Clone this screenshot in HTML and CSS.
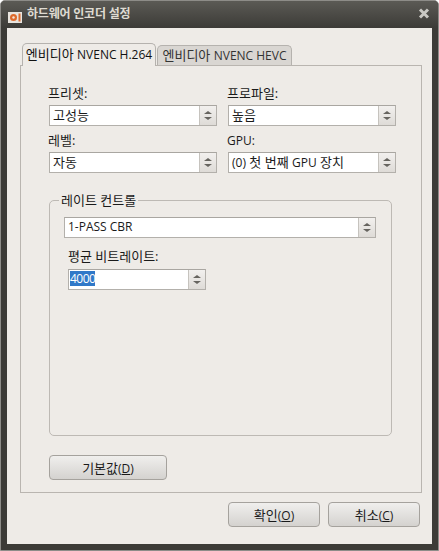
FILE: index.html
```html
<!DOCTYPE html>
<html lang="ko">
	<head>
		<meta charset="utf-8">
		<title>하드웨어 인코더 설정</title>
		<link rel="stylesheet" href="styles.css">
	</head>
	<body>
		<div class="window">
			<div class="titlebar">
				<svg class="app-icon" width="14" height="11" viewBox="0 0 14 11">
					<rect x="0" y="0" width="14" height="11" fill="#e9e5df"/>
					<circle cx="5.5" cy="5.5" r="3.5" fill="#de6a2c"/>
					<circle cx="5.5" cy="5.5" r="1.2" fill="#f6e6d8"/>
					<rect x="10.5" y="1.5" width="2" height="8" fill="#de6a2c"/>
				</svg>
				<span class="window-title">하드웨어 인코더 설정</span>
				<svg class="close-icon" width="12" height="11" viewBox="0 0 12 11">
					<path d="M2 1.5 L10 9.5 M10 1.5 L2 9.5" stroke="#c9c8c3" stroke-width="3"/>
				</svg>
			</div>

			<div class="content">
				<div class="tabs">
					<div class="tab active">엔비디아 <span class="lat">NVENC H.264</span></div>
					<div class="tab">엔비디아 <span class="lat">NVENC HEVC</span></div>
				</div>

				<div class="pane">
					<div class="form-grid">
						<div class="field">
							<label>프리셋:</label>
							<div class="combo"><span class="combo-text">고성능</span><span class="arrows"><i class="up"></i><i class="down"></i></span></div>
						</div>
						<div class="field">
							<label>프로파일:</label>
							<div class="combo"><span class="combo-text">높음</span><span class="arrows"><i class="up"></i><i class="down"></i></span></div>
						</div>
						<div class="field">
							<label>레벨:</label>
							<div class="combo"><span class="combo-text">자동</span><span class="arrows"><i class="up"></i><i class="down"></i></span></div>
						</div>
						<div class="field">
							<label class="lat">GPU:</label>
							<div class="combo"><span class="combo-text"><span class="lat">(0)</span> 첫 번째 <span class="lat">GPU</span> 장치</span><span class="arrows"><i class="up"></i><i class="down"></i></span></div>
						</div>
					</div>

					<div class="group">
						<span class="group-title">레이트 컨트롤</span>
						<div class="combo"><span class="combo-text lat">1-PASS CBR</span><span class="arrows"><i class="up"></i><i class="down"></i></span></div>
						<div class="bitrate">
							<label>평균 비트레이트:</label>
							<div class="combo spin"><span class="combo-text lat"><span class="selected">4000</span></span><span class="arrows"><i class="up"></i><i class="down"></i></span></div>
						</div>
					</div>

					<button class="btn btn-default" type="button">기본값<span class="lat">(<u>D</u>)</span></button>
				</div>

				<div class="actions">
					<button class="btn btn-action" type="button">확인<span class="lat">(<u>O</u>)</span></button>
					<button class="btn btn-action" type="button">취소<span class="lat">(<u>C</u>)</span></button>
				</div>
			</div>
		</div>
	</body>
</html>
```

FILE: styles.css
```css
html, body {
	margin: 0;
	height: 100%;
}

body {
	background: #fff;
	font-family: "Open Sans", "Noto Sans CJK KR", sans-serif;
	font-size: 13px;
	color: #1a1a1a;
}

/* latin runs sit a size below the korean text */
.lat {
	font-size: 12px;
}

.window {
	box-sizing: border-box;
	width: 439px;
	height: 551px;
	padding: 0 6px 6px 6px;
	background: #3c3b37;
	border: 1px solid #8d8c88;
	border-radius: 5px 5px 0 0;
	display: flex;
	flex-direction: column;
}

.titlebar {
	flex: none;
	height: 27px;
	margin: 0 -6px;
	padding: 0 5px 0 7px;
	display: flex;
	align-items: center;
	border-radius: 4px 4px 0 0;
	background: linear-gradient(#5b5a55, #3c3b37);
}

.app-icon {
	flex: none;
	margin-top: 5px;
}

.window-title {
	margin: -3px 0 0 5px;
	color: #dfdbd2;
	font-size: 12px;
	font-weight: 700;
	letter-spacing: -0.2px;
	flex: 1;
}

.close-icon {
	margin: -2px 3px 0 0;
}

.content {
	flex: 1;
	background: #eeebe7;
	padding: 15px 10px 0 13px;
	display: flex;
	flex-direction: column;
}

.tabs {
	display: flex;
	height: 22px;
	padding-left: 2px;
	position: relative;
	z-index: 1;
}

.tab {
	box-sizing: border-box;
	width: 135px;
	height: 20px;
	margin-top: 2px;
	margin-right: 1px;
	text-align: center;
	line-height: 18px;
	white-space: nowrap;
	background: #d9d6d2;
	color: #333;
	border: 1px solid #b5b2ae;
	border-bottom: none;
	border-radius: 5px 5px 0 0;
}

.tab.active {
	width: 134px;
	height: 23px;
	margin-top: 0;
	line-height: 20px;
	background: #eeebe7;
	color: #111;
}

.pane {
	box-sizing: border-box;
	height: 428px;
	border: 1px solid #b9b5b0;
	padding: 20px 0 0 28px;
}

.form-grid {
	display: grid;
	grid-template-columns: 168px 168px;
	column-gap: 11px;
	row-gap: 7px;
}

.field label {
	display: block;
	height: 19px;
	line-height: 15px;
	margin-left: -1px;
}

.combo {
	box-sizing: border-box;
	height: 21px;
	display: flex;
	background: #fff;
	border: 1px solid #b3b0ab;
	border-top-color: #a9a6a1;
}

.combo-text {
	flex: 1;
	padding-left: 3px;
	line-height: 18px;
	white-space: nowrap;
}

.arrows {
	flex: none;
	width: 16px;
	display: flex;
	flex-direction: column;
	align-items: center;
	justify-content: center;
	gap: 3px;
	background: linear-gradient(#f2f0ee, #dedbd7);
	border-left: 1px solid #c6c3be;
}

.arrows i {
	display: block;
	width: 0;
	height: 0;
	border-left: 4px solid transparent;
	border-right: 4px solid transparent;
}

.arrows .up {
	border-bottom: 3px solid #66645f;
}

.arrows .down {
	border-top: 3px solid #66645f;
}

.group {
	box-sizing: border-box;
	position: relative;
	width: 343px;
	height: 236px;
	margin-top: 27px;
	padding: 16px 15px 0 14px;
	border: 1px solid #bdb9b4;
	border-radius: 5px;
}

.group-title {
	position: absolute;
	top: -8px;
	left: 9px;
	padding: 0 2px;
	line-height: 15px;
	background: #eeebe7;
}

.bitrate {
	margin: 9px 0 0 4px;
}

.bitrate label {
	display: block;
	height: 22px;
	line-height: 18px;
}

.spin {
	width: 138px;
}

.spin .combo-text {
	padding-left: 1px;
}

.selected {
	display: inline-block;
	margin-top: 1px;
	background: #3078c8;
	color: #fff;
	letter-spacing: -0.5px;
	line-height: 15px;
	vertical-align: top;
}

.btn {
	display: block;
	box-sizing: border-box;
	height: 25px;
	padding: 0;
	font: inherit;
	color: #1a1a1a;
	background: linear-gradient(#f0efed, #d4d2cf);
	border: 1px solid #a5a29d;
	border-radius: 4px;
}

.btn-default {
	width: 118px;
	margin-top: 19px;
}

.actions {
	display: flex;
	justify-content: flex-end;
	gap: 8px;
	margin-top: 9px;
	padding-right: 2px;
}

.btn-action {
	width: 92px;
}
```
